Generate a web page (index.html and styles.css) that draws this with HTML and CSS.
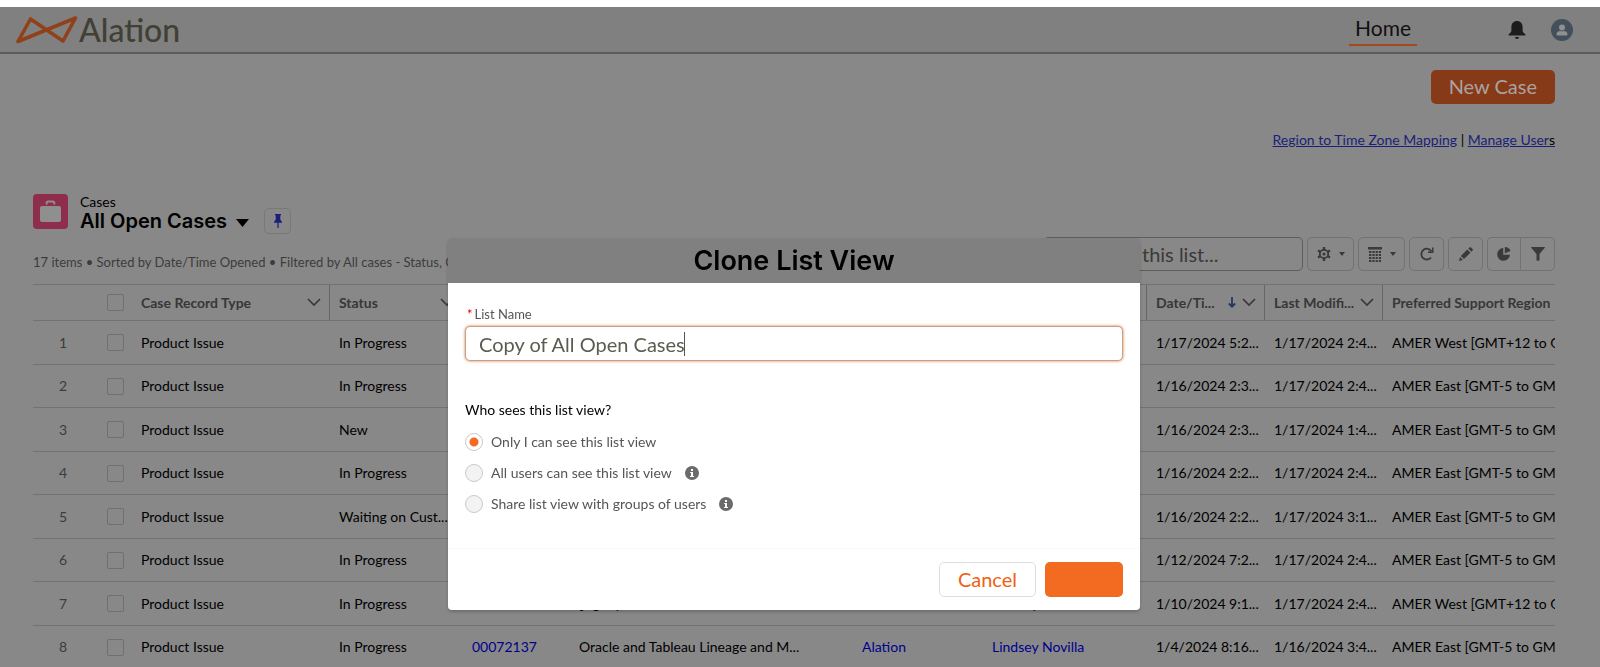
FILE: index.html
```html
<!DOCTYPE html>
<html lang="en">
<head>
<meta charset="utf-8">
<title>Cases</title>
<link rel="stylesheet" href="styles.css">
</head>
<body>
<svg class="defs" aria-hidden="true">
  <symbol id="chev" viewBox="0 0 14 9"><path d="M1 1l6 6 6-6" fill="none" stroke="currentColor" stroke-width="1.6"/></symbol>
  <symbol id="caret" viewBox="0 0 6 4"><path d="M0 0h6L3 4z" fill="currentColor"/></symbol>
  <symbol id="info" viewBox="0 0 14 14"><circle cx="7" cy="7" r="7" fill="#6b6b6b"/><path d="M6 3h2v2H6zM5.200 6H8v4h1v1H5v-1h1V7h-.8z" fill="#fff"/></symbol>
</svg>
<header class="topbar">
  <a class="logo" href="#">
    <svg class="logo-mark" viewBox="0 0 62 28" aria-hidden="true"><path d="M2 25.500L14.500 3 47 25 59.500 2z" fill="none" stroke="#91411a" stroke-width="3.600" stroke-linejoin="round"/></svg>
    <span class="logo-text">Alation</span>
  </a>
  <nav class="nav">
    <a class="nav-home" href="#">Home</a>
    <button class="plain" aria-label="Notifications"><svg width="18" height="18" viewBox="0 0 18 18"><path d="M9 0C5.500 0 3.400 2.500 3.400 6v3.500c0 1.500-.9 2.200-2.200 3.200-1 .8-.8 1.800.2 1.800h15.200c1 0 1.200-1 .2-1.800-1.300-1-2.200-1.700-2.200-3.200V6C14.600 2.500 12.500 0 9 0zM6.800 16c.3 1.200 1.200 2 2.200 2s1.900-.8 2.200-2z" fill="#1c1c1c"/></svg></button>
    <button class="plain" aria-label="Profile"><svg width="22" height="22" viewBox="0 0 22 22"><circle cx="11" cy="11" r="11" fill="#444f5c"/><circle cx="11" cy="8.500" r="3" fill="#909090"/><path d="M5.500 15.500c0-2.500 2-3.500 3.800-3.500 1 .6 2.400.6 3.400 0 1.800 0 3.800 1 3.800 3.500 0 .5-.4.900-.9.900H6.400c-.5 0-.9-.4-.9-.9z" fill="#909090"/></svg></button>
  </nav>
</header>
<main class="page">
  <button class="new-case">New Case</button>
  <p class="links"><a href="#">Region to Time Zone Mapping</a> | <a href="#">Manage User<span class="dark">s</span></a></p>
  <div class="list-title">
    <svg class="case-icon" viewBox="0 0 35 35" aria-hidden="true"><rect width="35" height="35" rx="4" fill="#8f2d4c"/><rect x="7" y="12" width="21" height="16" rx="2" fill="#8f8f8f"/><path d="M13.700 10.500V9q0-1.500 1.500-1.500h4.600Q21.300 7.500 21.300 9v1.500" fill="none" stroke="#8f8f8f" stroke-width="2"/></svg>
    <div class="names">
      <span class="object">Cases</span>
      <h1>All Open Cases</h1>
    </div>
    <button class="plain picker" aria-label="Select list view"><svg width="13" height="8" viewBox="0 0 13 8"><path d="M0 0h13L6.500 8z" fill="#000"/></svg></button>
    <button class="tool pin" aria-label="Pinned list"><svg width="8" height="14" viewBox="0 0 8 14"><path d="M1 0h6v1.300H6.300V5.500L8 8v.7H4.600V14H3.400V8.700H0V8l1.700-2.500V1.300H1z" fill="#1a1f78"/></svg></button>
  </div>
  <div class="list-bar">
    <p class="meta">17 items • Sorted by Date/Time Opened • Filtered by All cases - Status, Ca</p>
    <input class="search" type="search" placeholder="Search this list..." aria-label="Search this list">
    <button class="tool wide" aria-label="List view controls"><svg width="14" height="14" viewBox="0 0 14 14"><path d="M7 0v3M7 11v3M1 3.500L3.500 5M10.500 9l2.500 1.500M1 10.500L3.500 9M10.500 5L13 3.500" stroke="#3a3a3a" stroke-width="2.400"/><circle cx="7" cy="7" r="4.200" fill="none" stroke="#3a3a3a" stroke-width="1.800"/><circle cx="7" cy="7" r="1.600" fill="#3a3a3a"/></svg><svg width="6" height="4"><use href="#caret"/></svg></button>
    <button class="tool wide" aria-label="Display as"><svg width="14" height="15" viewBox="0 0 14 15"><path d="M0 0h14v2.500H0zM1 4h2.400v2H1zm3.400 0h2.200v2H4.400zm3.200 0h2.200v2H7.600zm3.200 0h2.200v2h-2.200zM1 7h2.400v2H1zm3.400 0h2.200v2H4.400zm3.200 0h2.200v2H7.600zm3.200 0h2.200v2h-2.200zM1 10h2.400v2H1zm3.400 0h2.200v2H4.400zm3.200 0h2.200v2H7.600zm3.200 0h2.200v2h-2.200zM1 13h2.400v2H1zm3.400 0h2.200v2H4.400zm3.200 0h2.200v2H7.600zm3.200 0h2.200v2h-2.200z" fill="#3a3a3a"/></svg><svg width="6" height="4"><use href="#caret"/></svg></button>
    <button class="tool" aria-label="Refresh"><svg width="14" height="14" viewBox="0 0 14 14"><path d="M11 10.500A5.400 5.400 0 1 1 11.500 4.500" fill="none" stroke="#3a3a3a" stroke-width="1.800"/><path d="M13.500.5V6H8V4.600h4V.5z" fill="#3a3a3a"/></svg></button>
    <button class="tool" aria-label="Edit"><svg width="14" height="14" viewBox="0 0 14 14"><path d="M0 14l1-4L3.900 13zM1.900 9L8.300 2.600l3.100 3.100L5 12.100zM9.300 1.600L10.500.4q.7-.7 1.400 0l1.700 1.700q.7.700 0 1.400L12.400 4.700z" fill="#3a3a3a"/></svg></button>
    <div class="tool-group">
      <button class="tool" aria-label="Charts"><svg width="14" height="14" viewBox="0 0 14 14"><path d="M6.200 1v6.800H13A6.400 6.400 0 1 1 6.200 1z" fill="#3a3a3a"/><path d="M7.800 0A6 6 0 0 1 13.500 4L7.800 6.300z" fill="#3a3a3a"/></svg></button>
      <button class="tool" aria-label="Filters"><svg width="14" height="14" viewBox="0 0 14 14"><path d="M.5 0h13q.8 0 .3.800L8.500 7v6q0 .8-.8.800H6.300q-.8 0-.8-.8V7L.2.800Q-.3 0 .5 0z" fill="#3a3a3a"/></svg></button>
    </div>
  </div>
  <table class="cases">
    <colgroup><col class="c-num"><col class="c-check"><col class="c-type"><col class="c-status"><col class="c-case"><col class="c-subject"><col class="c-account"><col class="c-contact"><col class="c-date"><col class="c-date"><col></colgroup>
    <thead>
      <tr>
        <th></th><th class="check"><input type="checkbox" aria-label="Select all"></th>
        <th class="sep"><div class="head"><span>Case Record Type</span><svg width="14" height="9"><use href="#chev"/></svg></div></th>
        <th class="sep"><div class="head"><span>Status</span><svg width="14" height="9"><use href="#chev"/></svg></div></th>
        <th class="sep"></th><th class="sep"></th><th class="sep"></th><th class="sep"></th>
        <th class="sep"><div class="head"><span>Date/Ti...</span><svg class="sort" width="8" height="11" viewBox="0 0 8 11"><path d="M4 0v9.500M.8 6.500L4 9.700l3.200-3.200" fill="none" stroke="#24395c" stroke-width="1.800"/></svg><svg width="14" height="9"><use href="#chev"/></svg></div></th>
        <th class="sep"><div class="head"><span>Last Modifi...</span><svg width="14" height="9"><use href="#chev"/></svg></div></th>
        <th class="region">Preferred Support Region</th>
      </tr>
    </thead>
    <tbody>
      <tr><td class="num">1</td><td class="check"><input type="checkbox" aria-label="Select row 1"></td><td>Product Issue</td><td>In Progress</td><td></td><td></td><td></td><td></td><td>1/17/2024 5:2...</td><td>1/17/2024 2:4...</td><td class="region">AMER West [GMT+12 to G</td></tr>
      <tr><td class="num">2</td><td class="check"><input type="checkbox" aria-label="Select row 2"></td><td>Product Issue</td><td>In Progress</td><td></td><td></td><td></td><td></td><td>1/16/2024 2:3...</td><td>1/17/2024 2:4...</td><td class="region">AMER East [GMT-5 to GMT</td></tr>
      <tr><td class="num">3</td><td class="check"><input type="checkbox" aria-label="Select row 3"></td><td>Product Issue</td><td>New</td><td></td><td></td><td></td><td></td><td>1/16/2024 2:3...</td><td>1/17/2024 1:4...</td><td class="region">AMER East [GMT-5 to GMT</td></tr>
      <tr><td class="num">4</td><td class="check"><input type="checkbox" aria-label="Select row 4"></td><td>Product Issue</td><td>In Progress</td><td></td><td></td><td></td><td></td><td>1/16/2024 2:2...</td><td>1/17/2024 2:4...</td><td class="region">AMER East [GMT-5 to GMT</td></tr>
      <tr><td class="num">5</td><td class="check"><input type="checkbox" aria-label="Select row 5"></td><td>Product Issue</td><td>Waiting on Cust...</td><td></td><td></td><td></td><td></td><td>1/16/2024 2:2...</td><td>1/17/2024 3:1...</td><td class="region">AMER East [GMT-5 to GMT</td></tr>
      <tr><td class="num">6</td><td class="check"><input type="checkbox" aria-label="Select row 6"></td><td>Product Issue</td><td>In Progress</td><td></td><td></td><td></td><td></td><td>1/12/2024 7:2...</td><td>1/17/2024 2:4...</td><td class="region">AMER East [GMT-5 to GMT</td></tr>
      <tr><td class="num">7</td><td class="check"><input type="checkbox" aria-label="Select row 7"></td><td>Product Issue</td><td>In Progress</td><td></td><td>[Agility</td><td></td><td><a href="#">Lindsey Novilla</a></td><td>1/10/2024 9:1...</td><td>1/17/2024 2:4...</td><td class="region">AMER West [GMT+12 to G</td></tr>
      <tr><td class="num">8</td><td class="check"><input type="checkbox" aria-label="Select row 8"></td><td>Product Issue</td><td>In Progress</td><td><a href="#">00072137</a></td><td>Oracle and Tableau Lineage and M...</td><td><a href="#">Alation</a></td><td><a href="#">Lindsey Novilla</a></td><td>1/4/2024 8:16...</td><td>1/16/2024 3:4...</td><td class="region">AMER East [GMT-5 to GMT</td></tr>
    </tbody>
  </table>
</main>
<div class="backdrop">
  <form class="modal" role="dialog" aria-labelledby="modal-title">
    <h2 id="modal-title" class="modal-title">Clone List View</h2>
    <div class="modal-body">
      <label class="field-label" for="list-name"><abbr class="req">*</abbr>List Name</label>
      <input class="field" id="list-name" type="text" value="Copy of All Open Cases">
      <fieldset class="choices">
        <legend>Who sees this list view?</legend>
        <div class="choice"><input type="radio" name="who" id="who-me" checked><label for="who-me">Only I can see this list view</label></div>
        <div class="choice"><input type="radio" name="who" id="who-all"><label for="who-all">All users can see this list view</label><svg width="14" height="14"><use href="#info"/></svg></div>
        <div class="choice"><input type="radio" name="who" id="who-group"><label for="who-group">Share list view with groups of users</label><svg width="14" height="14"><use href="#info"/></svg></div>
      </fieldset>
    </div>
    <div class="modal-foot">
      <button class="cancel" type="button">Cancel</button>
      <button class="save" type="button" aria-label="Save"></button>
    </div>
  </form>
</div>
</body>
</html>
```

FILE: styles.css
```css
* { box-sizing: border-box; }
html, body { height: 100%; }
body {
  margin: 0;
  border-top: 7px solid #fff;
  background: #888;
  color: #000;
  font: 14px/20px Lato, "Open Sans", sans-serif;
  overflow: hidden;
}
button, input { font: inherit; }
p, h1, h2 { margin: 0; }
svg { display: block; flex: none; }
.defs { position: absolute; width: 0; height: 0; }
.plain { padding: 0; border: 0; background: none; }

.topbar {
  display: flex;
  justify-content: space-between;
  height: 47px;
  padding: 0 27px 0 16px;
  background: #808080;
  border-bottom: 2px solid #5c5c5c;
}
.logo { display: flex; align-items: center; gap: 1px; text-decoration: none; }
.logo-mark { width: 62px; height: 28px; }
.logo-text { color: #404034; font-size: 32px; font-weight: 500; line-height: 45px; }
.nav { display: flex; align-items: center; }
.nav-home {
  height: 32px;
  margin-right: 91px;
  padding: 0 6px;
  border-bottom: 2px solid #a24a1e;
  color: #111;
  font-size: 21px;
  line-height: 28px;
  text-decoration: none;
}
.nav .plain + .plain { margin-left: 25px; }

.page { display: flex; flex-direction: column; padding: 16px 45px 0 33px; }
.new-case {
  align-self: flex-end;
  height: 34px;
  padding: 0 18px 2px;
  border: 0;
  border-radius: 5px;
  background: #873a18;
  color: #a9a3a0;
  font-size: 20px;
}
.links { margin-top: 26px; text-align: right; }
.links a { color: #1a1f78; }
.links .dark { color: #000; }

.list-title { display: flex; height: 43px; margin-top: 44px; }
.case-icon { width: 35px; height: 35px; }
.names { display: flex; flex-direction: column; margin-left: 12px; }
.object { line-height: 15px; }
h1 { font: 600 20px/24px Inter, sans-serif; }
.picker { align-self: flex-start; margin: 25px 15px 0 9px; }
.tool {
  display: flex;
  align-items: center;
  justify-content: center;
  width: 35px;
  height: 34px;
  padding: 0;
  border: 1px solid #727272;
  border-radius: 5px;
  background: none;
  color: #3a3a3a;
}
.tool.wide { width: 47px; gap: 8px; }
.tool.pin { width: 27px; height: 26px; margin-top: 14px; border-color: #787878; }

.list-bar { display: flex; align-items: flex-end; gap: 4px; }
.meta {
  flex: 1;
  min-width: 0;
  color: #3c3c3c;
  font-size: 13px;
  line-height: 18px;
  white-space: nowrap;
}
.search {
  width: 260px;
  height: 34px;
  padding: 0 12px 0 34px;
  border: 1px solid #5f5d5a;
  border-radius: 5px;
  background: none;
  font-size: 20px;
}
.search::placeholder { color: #3a3a3a; opacity: 1; }
.tool-group { display: flex; }
.tool-group .tool:first-child { border-right: 0; border-radius: 5px 0 0 5px; width: 33px; }
.tool-group .tool:last-child { border-radius: 0 5px 5px 0; }

.cases {
  width: 100%;
  margin-top: 13px;
  border-collapse: separate;
  border-spacing: 0;
  border-top: 1px solid #727272;
  table-layout: fixed;
}
.c-num { width: 64px; }
.c-check { width: 35px; }
.c-type { width: 198px; }
.c-status { width: 133px; }
.c-case { width: 107px; }
.c-subject { width: 283px; }
.c-account { width: 130px; }
.c-contact { width: 164px; }
.c-date { width: 118px; }
th, td {
  padding: 0 8px 0 9px;
  border-bottom: 1px solid #727272;
  text-align: left;
  white-space: nowrap;
}
th { height: 36px; color: #373737; font-weight: 700; }
.sep { border-right: 1px solid #666; }
.head { display: flex; align-items: center; }
.head span { flex: 1; min-width: 0; }
.head svg { margin-left: 6px; }
td { height: 44px; }
tr:nth-child(even) td { height: 43px; }
td a { color: #00008c; text-decoration: none; }
.num { padding-right: 30px; color: #3c3c3c; text-align: right; }
.region { overflow: hidden; padding-right: 0; }
.check { padding: 0 0 0 10px; }
.check input {
  display: block;
  appearance: none;
  width: 17px;
  height: 17px;
  margin: 0;
  border: 1px solid #6f6f6f;
  border-radius: 2px;
}

.backdrop {
  position: fixed;
  inset: 0;
  display: flex;
  align-items: flex-start;
  justify-content: center;
  padding: 238px 12px 0 0;
}
.modal { width: 692px; max-width: 100%; border-radius: 4px; box-shadow: 0 2px 3px rgba(0, 0, 0, .2); }
.modal-title {
  border-radius: 4px 4px 0 0;
  background: #808080;
  font: 600 27px/45px Inter, sans-serif;
  text-align: center;
}
.modal-body { padding: 22px 17px 34px; background: #fff; border-bottom: 1px solid #fafafa; }
.field-label { display: flex; gap: 2px; padding: 0 2px; color: #555; font-size: 13px; line-height: 18px; }
.req { color: #e00; }
.field {
  display: block;
  width: 100%;
  height: 35px;
  margin-top: 3px;
  padding: 0 13px;
  border: 1px solid #b9a592;
  border-radius: 5px;
  outline: 0;
  background: linear-gradient(#555, #555) 218px center / 1px 24px no-repeat, #fff;
  box-shadow: 0 0 3px #f26b21;
  color: #5b5b4f;
  font-size: 20px;
}
.choices { margin: 39px 0 0; padding: 0; border: 0; }
.choices legend { padding: 0; margin-bottom: 12px; }
.choice { display: flex; align-items: center; height: 20px; margin-bottom: 11px; color: #555; }
.choice:last-child { margin-bottom: 0; }
.choice input {
  appearance: none;
  width: 18px;
  height: 18px;
  margin: 0 8px 0 0;
  border: 1px solid #c9c9c9;
  border-radius: 50%;
  background: #f3f3f3;
}
.choice input:checked { background: radial-gradient(circle, #f26b21 4px, #fff 5px); }
.choice svg { margin-left: 13px; }
.modal-foot {
  display: flex;
  justify-content: flex-end;
  gap: 9px;
  padding: 13px 17px;
  border-radius: 0 0 4px 4px;
  background: #fff;
}
.cancel, .save { height: 35px; border-radius: 5px; font-size: 20px; }
.cancel { padding: 0 18px 2px; border: 1px solid #ddd; background: #fff; color: #f2600f; }
.save { width: 78px; border: 0; background: #f26b21; }
```
